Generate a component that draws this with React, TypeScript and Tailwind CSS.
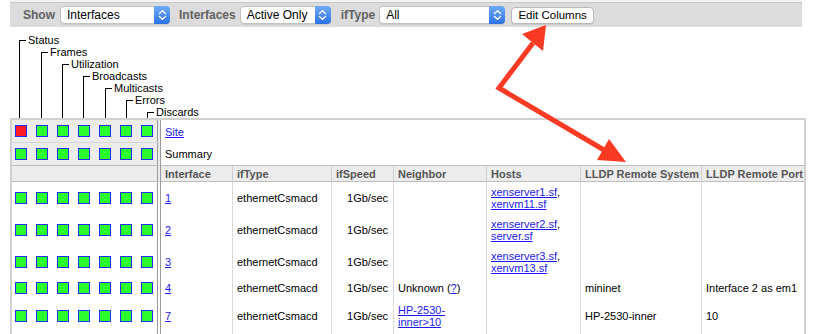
import React from 'react';

const legendLabels = ['Status', 'Frames', 'Utilization', 'Broadcasts', 'Multicasts', 'Errors', 'Discards'];

const rows = [
  { iface: '1', neighbor: '', hosts: ['xenserver1.sf', 'xenvm11.sf'], sys: '', port: '' },
  { iface: '2', neighbor: '', hosts: ['xenserver2.sf', 'server.sf'], sys: '', port: '' },
  { iface: '3', neighbor: '', hosts: ['xenserver3.sf', 'xenvm13.sf'], sys: '', port: '' },
  { iface: '4', neighbor: 'unknown', hosts: [], sys: 'mininet', port: 'Interface 2 as em1' },
  { iface: '7', neighbor: 'hp', hosts: [], sys: 'HP-2530-inner', port: '10' },
];

function Chevrons() {
  return (
    <svg width="15" height="16" viewBox="0 0 15 16" fill="none" stroke="white" strokeWidth="1.4" strokeLinecap="round" strokeLinejoin="round">
      <path d="M4.5 6.5 L7.5 3.8 L10.5 6.5" />
      <path d="M4.5 9.5 L7.5 12.2 L10.5 9.5" />
    </svg>
  );
}

function Select({ value, width }: { value: string; width: string }) {
  return (
    <div className={`flex h-[18px] items-stretch rounded-[4px] border border-[#c2c2c2] bg-white shadow-[0_1px_0_rgba(0,0,0,0.08)] ${width}`}>
      <span className="flex-1 pl-[6px] text-[12px] leading-[16px] text-black">{value}</span>
      <span className="-my-px -mr-px flex w-[16px] items-center justify-center rounded-r-[4px] bg-linear-to-b from-[#6fa9f8] to-[#2a72e5]">
        <Chevrons />
      </span>
    </div>
  );
}

function LegendItem({ labels, depth }: { labels: string[]; depth: number }) {
  const [first, ...rest] = labels;
  // spacing between the brackets is 21px, give or take a pixel
  const offset = depth % 3 === 0 ? 'ml-[21px]' : 'ml-[20px]';
  return (
    <div className="flex flex-col border-l border-black">
      <div className="-mt-[6px] flex h-[12px] items-center">
        <span className="h-px w-[6px] bg-black" />
        <span className="ml-[2px] leading-[12px]">{first}</span>
      </div>
      {rest.length > 0 && (
        <div className={`${offset} mt-[6px] flex flex-col`}>
          <LegendItem labels={rest} depth={depth + 1} />
        </div>
      )}
    </div>
  );
}

function Squares({ first = 'green' }: { first?: 'green' | 'red' }) {
  return (
    <div className="flex gap-[9px] pl-[3px]">
      {Array.from({ length: 7 }).map((_, i) => (
        <span
          key={i}
          className={`h-[12px] w-[12px] border border-[#1f2bff] ${i === 0 && first === 'red' ? 'bg-[#ff1a24]' : 'bg-[#2bff2b]'}`}
        />
      ))}
    </div>
  );
}

function Link({ children }: { children: React.ReactNode }) {
  return <a className="cursor-pointer text-[#1a1aee] underline">{children}</a>;
}

export default function App() {
  const statusCell = 'border-r-4 border-double border-r-[#9a9a9a] align-middle';
  const th = 'border-l border-[#cfcfcf] pl-[4px] text-left font-bold text-[#555]';
  const td = 'border-l border-[#dadada] py-[4px] pl-[4px] align-middle';

  return (
    <div className="relative h-[334px] w-[813px] overflow-hidden bg-white font-['Liberation_Sans',Arial,sans-serif] text-[11px] text-black">
      {/* toolbar */}
      <div className="ml-[10px] w-[792px] bg-[#dcdcdc]">
        <div className="h-[3px] border-b border-[#c8c8c8] bg-[#f3f3f3]" />
        <div className="flex h-[24px] items-center pl-[13px] text-[12px]">
          <span className="font-bold text-[#626262]">Show</span>
          <div className="ml-[5px]">
            <Select value="Interfaces" width="w-[110px]" />
          </div>
          <span className="ml-[9px] font-bold text-[#626262]">Interfaces</span>
          <div className="ml-[4px]">
            <Select value="Active Only" width="w-[91px]" />
          </div>
          <span className="ml-[10px] font-bold text-[#626262]">ifType</span>
          <div className="ml-[4px]">
            <Select value="All" width="w-[126px]" />
          </div>
          <button className="ml-[6px] h-[17px] w-[83px] rounded-[4px] border border-[#b9b9b9] bg-white text-[11.5px] leading-[15px] text-black shadow-[0_1px_0_rgba(0,0,0,0.08)]">
            Edit Columns
          </button>
        </div>
      </div>

      {/* legend */}
      <div className="ml-[19px] flex flex-col pt-[13px]">
        <LegendItem labels={legendLabels} depth={0} />
      </div>

      {/* interface table */}
      <table className="ml-[10px] w-[796px] table-fixed border-separate border-spacing-0 border-2 border-[#d0d0d0] leading-[12px]">
        <colgroup>
          <col className="w-[149px]" />
          <col className="w-[71px]" />
          <col className="w-[99px]" />
          <col className="w-[62px]" />
          <col className="w-[93px]" />
          <col className="w-[94px]" />
          <col className="w-[121px]" />
          <col className="w-[103px]" />
        </colgroup>
        <tbody>
          <tr>
            <td className={`h-[23px] border-b border-b-[#d6d6d6] bg-[#ececec] ${statusCell}`}>
              <Squares first="red" />
            </td>
            <td colSpan={7} className="pl-[4px] align-middle">
              <Link>Site</Link>
            </td>
          </tr>
          <tr>
            <td className={`h-[22px] bg-[#ececec] ${statusCell}`}>
              <Squares />
            </td>
            <td colSpan={7} className="pl-[4px] align-middle">
              Summary
            </td>
          </tr>
          <tr className="bg-[#ececec]">
            <td className={`h-[17px] border-y border-y-[#bdbdbd] ${statusCell}`} />
            <th className="border-y border-[#bdbdbd] pl-[4px] text-left font-bold text-[#555]">Interface</th>
            <th className={`border-y border-y-[#bdbdbd] ${th}`}>ifType</th>
            <th className={`border-y border-y-[#bdbdbd] ${th}`}>ifSpeed</th>
            <th className={`border-y border-y-[#bdbdbd] ${th}`}>Neighbor</th>
            <th className={`border-y border-y-[#bdbdbd] ${th}`}>Hosts</th>
            <th className={`border-y border-y-[#bdbdbd] ${th}`}>LLDP Remote System</th>
            <th className={`border-y border-y-[#bdbdbd] ${th}`}>LLDP Remote Port</th>
          </tr>
          {rows.map((r, i) => (
            <tr key={r.iface}>
              <td className={`${statusCell} ${i === rows.length - 1 ? 'pt-[2px]' : ''}`}>
                <Squares />
              </td>
              <td className={`py-[4px] pl-[4px] align-middle ${i === rows.length - 1 ? 'pt-[6px]' : ''}`}>
                <Link>{r.iface}</Link>
              </td>
              <td className={`${td} ${i === rows.length - 1 ? 'pt-[6px]' : ''}`}>ethernetCsmacd</td>
              <td className={`${td} pr-[5px] text-right ${i === rows.length - 1 ? 'pt-[6px]' : ''}`}>1Gb/sec</td>
              <td className={`${td} ${i === rows.length - 1 ? 'pt-[6px]' : ''}`}>
                {r.neighbor === 'unknown' && (
                  <>
                    Unknown (<Link>?</Link>)
                  </>
                )}
                {r.neighbor === 'hp' && (
                  <Link>
                    HP-2530-
                    <br />
                    inner&gt;10
                  </Link>
                )}
              </td>
              <td className={`${td} ${i === rows.length - 1 ? 'pt-[6px]' : ''}`}>
                {r.hosts.length > 0 && (
                  <>
                    <Link>{r.hosts[0]}</Link>,
                    <br />
                    <Link>{r.hosts[1]}</Link>
                  </>
                )}
              </td>
              <td className={`${td} ${i === rows.length - 1 ? 'pt-[6px]' : ''}`}>{r.sys}</td>
              <td className={`${td} ${i === rows.length - 1 ? 'pt-[6px]' : ''}`}>{r.port}</td>
            </tr>
          ))}
          {/* more interfaces continue below the fold */}
          <tr>
            <td className={`h-[20px] ${statusCell}`} />
            <td />
            <td className="border-l border-[#dadada]" />
            <td className="border-l border-[#dadada]" />
            <td className="border-l border-[#dadada]" />
            <td className="border-l border-[#dadada]" />
            <td className="border-l border-[#dadada]" />
            <td className="border-l border-[#dadada]" />
          </tr>
        </tbody>
      </table>

      {/* annotation arrow */}
      <svg className="pointer-events-none absolute left-0 top-0" width="813" height="334">
        <polyline points="533,43 499,88 604,150" fill="none" stroke="#fb3a24" strokeWidth="5" strokeLinejoin="miter" />
        <polygon points="546,25 522,34 543,51" fill="#fb3a24" />
        <polygon points="626,162 597,160 609,139" fill="#fb3a24" />
      </svg>
    </div>
  );
}
